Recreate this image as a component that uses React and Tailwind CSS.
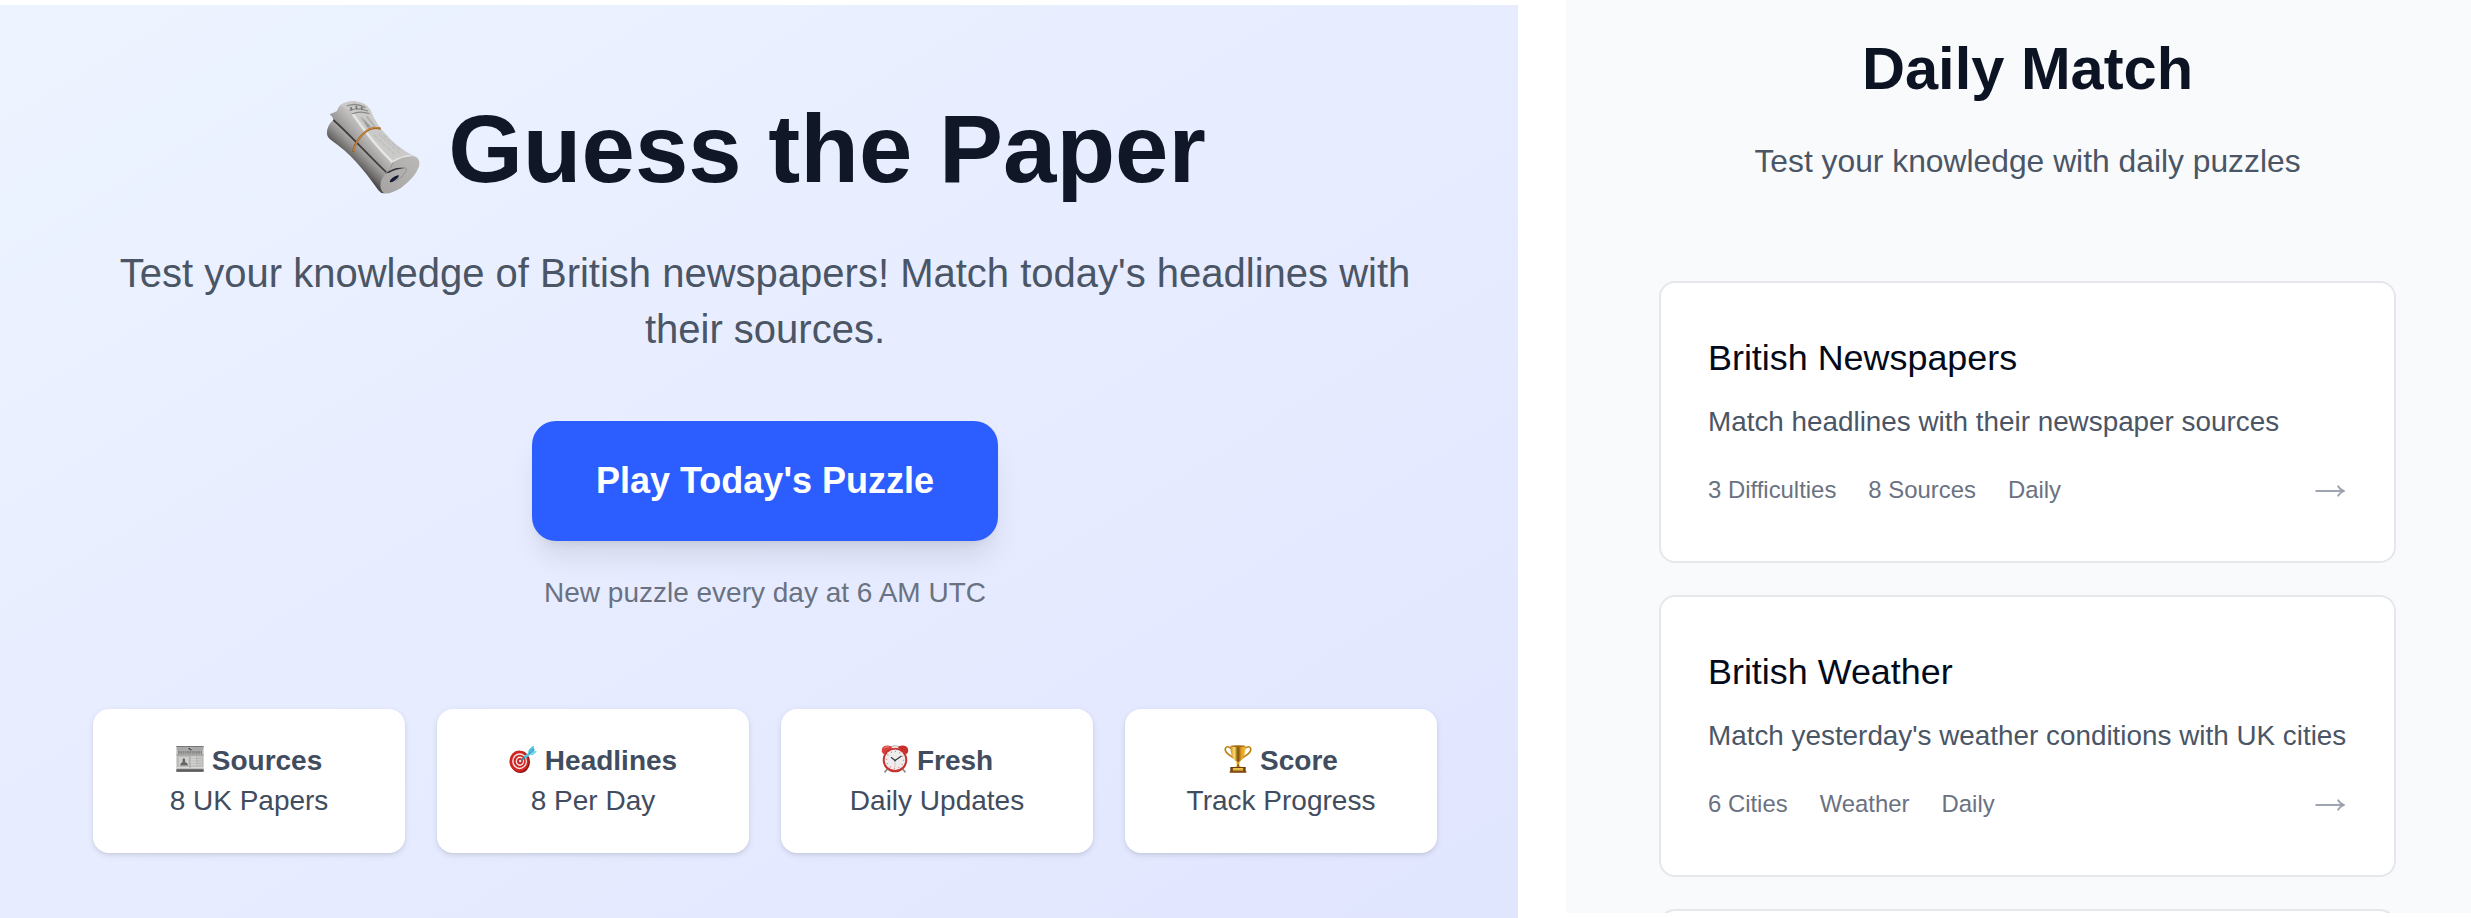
import React from "react";

function RolledPaper({ className }) {
  return (
    <svg className={className} viewBox="0 0 288 288" aria-hidden="true">
      <defs>
        <linearGradient id="rollShade" gradientUnits="userSpaceOnUse" x1="122" y1="140" x2="82" y2="182">
          <stop offset="0" stopColor="#b3b2b0" />
          <stop offset="0.35" stopColor="#979694" />
          <stop offset="0.75" stopColor="#6f6e6c" />
          <stop offset="1" stopColor="#4d4c4b" />
        </linearGradient>
        <linearGradient id="rollFlap" gradientUnits="userSpaceOnUse" x1="85" y1="130" x2="135" y2="85">
          <stop offset="0" stopColor="#8e8d8b" />
          <stop offset="0.6" stopColor="#b4b3b1" />
          <stop offset="1" stopColor="#c9c9c8" />
        </linearGradient>
        <linearGradient id="rollFace" x1="0" y1="1" x2="1" y2="0">
          <stop offset="0" stopColor="#a5a4a2" />
          <stop offset="1" stopColor="#bab9b7" />
        </linearGradient>
      </defs>
      <path d="M28 57Q8 74 9 97Q9 108 20 116C78 156 120 205 163 268Q170 278 182 277L215 215C150 165 90 110 28 57Z" fill="url(#rollShade)" />
      <path d="M17 40L38 31Q42 22 48 13Q70 -2 95 1C120 60 160 120 206 184L216 204L188 218C130 160 75 100 28 57Q26 46 17 40Z" fill="url(#rollFlap)" />
      <path d="M28 57C75 98 130 160 189 216" fill="none" stroke="#3e3d3c" strokeWidth="5" />
      <path d="M48 13Q70 -2 95 1Q125 4 139 26C150 55 166 80 188 102C212 130 240 150 270 165Q240 168 207 184C160 132 115 90 84 34Q66 22 48 13Z" fill="#cacac9" />
      <path d="M84 36C125 95 160 140 206 184Q230 168 262 165" fill="none" stroke="#e6e6e5" strokeWidth="7" />
      <path d="M68 15Q96 4 124 20M76 28Q100 18 132 30M82 39Q109 28 136 38" fill="none" stroke="#8a8a88" strokeWidth="4" />
      <path d="M80 18l4 10M96 15l3 10M112 18l3 9" stroke="#777674" strokeWidth="5" />
      <path d="M112 50l26 36M128 46l28 36" fill="none" stroke="#b1b1b0" strokeWidth="6" />
      <path d="M119 53l24 27-15-3z" fill="#989998" />
      <path d="M150 102l62 58M164 98l62 58M178 102l50 44" fill="none" stroke="#bdbebd" strokeWidth="4" strokeDasharray="14 4" />
      <path d="M207 184Q240 162 272 166Q290 174 285 196Q275 228 232 260Q200 280 180 277Q164 262 172 238Q182 220 207 184Z" fill="url(#rollFace)" />
      <path d="M207 184Q203 204 184 218Q208 206 236 200Q252 200 246 210Q238 228 214 241" fill="#b1b0ae" stroke="#918f8d" strokeWidth="2.500" />
      <path d="M185 217Q210 196 242 201Q214 204 196 215Z" fill="#2f303b" />
      <path d="M197 243Q199 229 224 222Q227 229 211 239Q201 246 197 243Z" fill="#161a35" />
      <path d="M88 154C88 125 125 86 142 83Q155 79 170 83" fill="none" stroke="#8a5a27" strokeWidth="6" />
      <path d="M89 151C90 124 126 85 142 82Q155 78 170 82" fill="none" stroke="#d08432" strokeWidth="4" />
    </svg>
  );
}

function Newspaper({ className }) {
  return (
    <svg className={className} viewBox="0 0 28 28" aria-hidden="true">
      <path d="M.4 1h27.2v25.8H.4z" fill="#bcbcbb" />
      <path d="M.4 1h27.2v1.2H.4z" fill="#777" />
      <path d="M1 3.200h10M16.500 3.200H27M1 4.600h26" stroke="#969696" strokeWidth=".7" />
      <path d="M12.500 3l3 2.200" stroke="#444" strokeWidth="1.400" />
      <path d="M2 7.200h24" stroke="#858585" strokeWidth="3" strokeDasharray="1.800 .450" />
      <path d="M.4 9.900h27.200" stroke="#888" strokeWidth=".8" />
      <path d="M3 12h9.500v9H3z" fill="#d0d0cf" />
      <path d="M4 20.500q.5-3 2.800-3.500-.9-3.800 1-3.800 2 0 1.100 3.800 2.800.5 3.200 3.500z" fill="#666" />
      <path d="M14.500 11.500H20v9h-5.500z" fill="#d2d2d1" />
      <path d="M21.500 11.500H26v9h-4.500z" fill="#c9c9c8" />
      <path d="M14.500 13.500H26M14.500 16H26M14.500 18.500H26" stroke="#b1b1b0" strokeWidth=".6" />
      <path d="M1 22.600h26" stroke="#ddd" strokeWidth="1" />
      <path d="M.4 24.200h27.200v2.600H.4z" fill="#5c5c5c" />
      <path d="M14 11v12" stroke="#999" strokeWidth=".6" />
    </svg>
  );
}

function Target({ className }) {
  return (
    <svg className={className} viewBox="0 0 28 28" aria-hidden="true">
      <ellipse cx="11.300" cy="17" rx="9.700" ry="11" fill="#8d1513" />
      <ellipse cx="10.100" cy="16.200" rx="9.700" ry="10.700" fill="#cf2522" />
      <ellipse cx="10.600" cy="16.200" rx="7.400" ry="8" fill="#f3e4e3" />
      <ellipse cx="10.700" cy="16.200" rx="6" ry="6.500" fill="#cf2522" />
      <ellipse cx="10.900" cy="16.200" rx="4.200" ry="4.700" fill="#f3e4e3" />
      <ellipse cx="11" cy="16.200" rx="2.900" ry="3.200" fill="#cf2522" />
      <ellipse cx="11.200" cy="16" rx="1.200" ry="1.300" fill="#f7ecec" />
      <path d="M12 15.500L22 7.500" stroke="#2d8aa0" strokeWidth="1.700" />
      <path d="M15.500 12.500L21.500 7.700" stroke="#57c6de" strokeWidth="2.400" />
      <path d="M19 8.200l.8-3.500L24.500.6l.7 4.900z" fill="#48bfdb" />
      <path d="M20 9.500l3.500.7L28 6.600l-4.300-1z" fill="#6fd5e8" />
      <path d="M20 9l5.500-4.500" stroke="#2b89a3" strokeWidth=".9" />
    </svg>
  );
}

function AlarmClock({ className }) {
  return (
    <svg className={className} viewBox="0 0 28 28" aria-hidden="true">
      <path d="M6.500 24L3.500 27.400M21.500 24l3 3.400" stroke="#8a8d90" strokeWidth="1.700" />
      <path d="M8 2.800Q14-1.200 20 2.800" fill="none" stroke="#a2a5a8" strokeWidth="1" />
      <path d="M.8 6.300Q.3.700 6 .4q3.800-.2 5.300 2.400L3 9.200Q1 8.500.8 6.300z" fill="#d9403c" />
      <path d="M27.200 6.300Q27.700.7 22 .4q-3.800-.2-5.300 2.400L25 9.200q2-.7 2.200-2.900z" fill="#c9302d" />
      <path d="M3 3.200Q5 1.300 8 2" fill="none" stroke="#f08b86" strokeWidth="1" />
      <circle cx="14" cy="15" r="12.300" fill="#c63230" />
      <circle cx="14" cy="14.800" r="10.300" fill="#ecedec" />
      <circle cx="14" cy="14.800" r="8.500" fill="none" stroke="#c9696a" strokeWidth="1.300" strokeDasharray=".8 3.650" />
      <path d="M10 12.200l4 3.200 6.500-4.400" fill="none" stroke="#36393d" strokeWidth="1.200" />
      <path d="M14 15.400v6.500" stroke="#d99" strokeWidth=".5" />
      <circle cx="14" cy="15.400" r=".9" fill="#33363a" />
    </svg>
  );
}

function Trophy({ className }) {
  return (
    <svg className={className} viewBox="0 0 28 28" aria-hidden="true">
      <defs>
        <linearGradient id="cup">
          <stop offset="0" stopColor="#c98913" />
          <stop offset="0.25" stopColor="#ffe073" />
          <stop offset="0.5" stopColor="#7d4a06" />
          <stop offset="0.72" stopColor="#e0a01f" />
          <stop offset="1" stopColor="#f3bd38" />
        </linearGradient>
      </defs>
      <path d="M7.500 3.500Q2-.3 1.200 4.200C1.200 9 6.500 10 10.500 13.500M20.500 3.500Q26-.3 26.800 4.200C26.800 9 21.500 10 17.500 13.500" fill="none" stroke="#bd8414" strokeWidth="1.700" />
      <path d="M6.500.9h15Q21.800 12 16 16.600h-4Q6.200 12 6.500.9z" fill="url(#cup)" />
      <ellipse cx="14" cy="1.100" rx="7.600" ry=".9" fill="#a36b0c" />
      <path d="M12.200 16h3.600l-.7 3.200q.2 1.800 2.400 3h-7q2.200-1.200 2.400-3z" fill="url(#cup)" />
      <ellipse cx="14" cy="18" rx="2.300" ry=".8" fill="#efbd3d" />
      <path d="M6.300 22h15.400v5.500H6.300z" fill="#6e3d12" />
      <path d="M5.600 26.200h16.800v1.500H5.600z" fill="#8b531a" />
      <path d="M8.800 23h10.400v2.700H8.800z" fill="#dfad33" />
      <path d="M9.500 23.800h9" stroke="#f8db76" strokeWidth=".7" />
    </svg>
  );
}

function LongArrow({ className }) {
  return (
    <svg className={className} viewBox="0 0 30 14" fill="none" stroke="currentColor" aria-hidden="true">
      <path d="M.5 7H28" strokeWidth="1.900" />
      <path d="M22.800 1.700Q24.500 5.300 29 7Q24.500 8.700 22.800 12.300" strokeWidth="1.800" />
    </svg>
  );
}

const facts = [
  { Icon: Newspaper, title: "Sources", text: "8 UK Papers" },
  { Icon: Target, title: "Headlines", text: "8 Per Day" },
  { Icon: AlarmClock, title: "Fresh", text: "Daily Updates" },
  { Icon: Trophy, title: "Score", text: "Track Progress" },
];

const games = [
  {
    title: "British Newspapers",
    text: "Match headlines with their newspaper sources",
    tags: ["3 Difficulties", "8 Sources", "Daily"],
  },
  {
    title: "British Weather",
    text: "Match yesterday's weather conditions with UK cities",
    tags: ["6 Cities", "Weather", "Daily"],
  },
];

function Fact({ Icon, title, text }) {
  return (
    <div className="h-36 rounded-2xl bg-white py-8 text-center text-[28px] leading-10 text-[#414c5e] shadow-[0_2px_6px_rgba(0,0,0,0.1),0_2px_4px_-2px_rgba(0,0,0,0.1)]">
      <div className="flex items-center justify-center gap-2 font-bold">
        <Icon className="mb-1 size-7 shrink-0" />
        <span>{title}</span>
      </div>
      <div>{text}</div>
    </div>
  );
}

function Game({ title, text, tags }) {
  return (
    <a className="block h-[282px] shrink-0 rounded-2xl border-2 border-[#e5e7eb] bg-white pt-[47px] pr-12 pl-[47px]">
      <h2 className="text-[35.9px] leading-[56px] text-[#030a1a]">{title}</h2>
      <p className="mt-4 text-[27.85px] leading-10 whitespace-nowrap text-[#4a5565]">{text}</p>
      <div className="mt-6 flex h-12 items-center justify-between">
        <div className="flex gap-8 text-[23.9px] leading-8 text-[#6a7282]">
          {tags.map((tag) => (
            <span key={tag}>{tag}</span>
          ))}
        </div>
        <LongArrow className="mt-0.5 mr-px h-3.5 w-[30px] text-[#99a1af]" />
      </div>
    </a>
  );
}

export default function App() {
  return (
    <div className="flex h-[918px] w-[2471px] overflow-hidden bg-white font-['Liberation_Sans',Arial,sans-serif]">
      <main className="mt-[5px] flex w-[1518px] shrink-0 flex-col items-start bg-linear-to-br from-[#edf4ff] via-[#e7ecff] to-[#e1e6ff] pt-24 pl-[93px]">
        <div className="flex w-[1344px] flex-col items-center">
          <h1 className="flex items-center gap-[28px] text-[96px] leading-none font-bold text-[#101828]">
            <RolledPaper className="size-24" />
            <span>Guess the Paper</span>
          </h1>
          <p className="mt-12 text-center text-[40px] leading-[56px] text-[#4a5565]">
            Test your knowledge of British newspapers! Match today's headlines with
            <br />
            their sources.
          </p>
          <button className="mt-16 h-[120px] w-[466px] rounded-3xl bg-[#2b5dff] text-[36px] leading-[56px] font-bold text-white shadow-[0_20px_30px_-6px_rgba(0,0,0,0.1),0_8px_12px_-8px_rgba(0,0,0,0.1)]">
            Play Today's Puzzle
          </button>
          <p className="mt-8 text-[28px] leading-10 text-[#6a7282]">New puzzle every day at 6 AM UTC</p>
          <div className="mt-24 grid w-full grid-cols-4 gap-8">
            {facts.map((fact) => (
              <Fact key={fact.title} {...fact} />
            ))}
          </div>
        </div>
      </main>
      <aside className="ml-12 flex h-[913px] flex-1 flex-col overflow-hidden bg-[#f9fafc] pt-[33px] pr-[75px] pl-[93px]">
        <header className="text-center">
          <h1 className="text-[59.600px] leading-[72px] font-bold text-[#0c1424]">Daily Match</h1>
          <p className="mt-8 text-[31.800px] leading-[48px] text-[#4a5565]">Test your knowledge with daily puzzles</p>
        </header>
        <div className="mt-24 flex flex-col gap-8">
          {games.map((game) => (
            <Game key={game.title} {...game} />
          ))}
          <div className="h-[282px] shrink-0 rounded-2xl border-2 border-[#e5e7eb] bg-white" />
        </div>
      </aside>
    </div>
  );
}
